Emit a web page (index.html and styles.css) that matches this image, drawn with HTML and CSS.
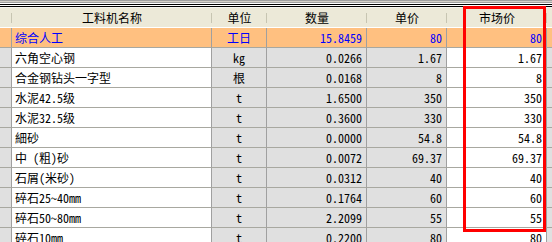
FILE: index.html
```html
<!DOCTYPE html>
<html>
<head>
<meta charset="utf-8">
<link rel="stylesheet" href="styles.css">
</head>
<body>
<div class="frame">
  <div class="topbar">
    <div class="l1"></div><div class="l2"></div><div class="l3"></div><div class="l4"></div>
    <div class="l5"></div><div class="l6"></div><div class="l7"></div><div class="l8"></div>
  </div>
  <div class="grid">
    <div class="hd"></div>
    <div class="hd">工料机名称</div>
    <div class="hd">单位</div>
    <div class="hd">数量</div>
    <div class="hd">单价</div>
    <div class="hd">市场价</div>
    <div class="hd last"></div>

    <div class="c rh sel"></div><div class="c name sel">综合人工</div><div class="c unit sel">工日</div><div class="c num sel">15.8459</div><div class="c num sel">80</div><div class="c num sel">80</div><div class="c ex sel"></div>
    <div class="c rh"></div><div class="c name">六角空心钢</div><div class="c unit g">kg</div><div class="c num g">0.0266</div><div class="c num g">1.67</div><div class="c num">1.67</div><div class="c ex g"></div>
    <div class="c rh"></div><div class="c name">合金钢钻头一字型</div><div class="c unit g">根</div><div class="c num g">0.0168</div><div class="c num g">8</div><div class="c num">8</div><div class="c ex g"></div>
    <div class="c rh"></div><div class="c name">水泥42.5级</div><div class="c unit g">t</div><div class="c num g">1.6500</div><div class="c num g">350</div><div class="c num">350</div><div class="c ex g"></div>
    <div class="c rh"></div><div class="c name">水泥32.5级</div><div class="c unit g">t</div><div class="c num g">0.3600</div><div class="c num g">330</div><div class="c num">330</div><div class="c ex g"></div>
    <div class="c rh"></div><div class="c name">細砂</div><div class="c unit g">t</div><div class="c num g">0.0000</div><div class="c num g">54.8</div><div class="c num">54.8</div><div class="c ex g"></div>
    <div class="c rh"></div><div class="c name">中 (粗)砂</div><div class="c unit g">t</div><div class="c num g">0.0072</div><div class="c num g">69.37</div><div class="c num">69.37</div><div class="c ex g"></div>
    <div class="c rh"></div><div class="c name">石屑(米砂)</div><div class="c unit g">t</div><div class="c num g">0.0312</div><div class="c num g">40</div><div class="c num">40</div><div class="c ex g"></div>
    <div class="c rh"></div><div class="c name">碎石25~40mm</div><div class="c unit g">t</div><div class="c num g">0.1764</div><div class="c num g">60</div><div class="c num">60</div><div class="c ex g"></div>
    <div class="c rh"></div><div class="c name">碎石50~80mm</div><div class="c unit g">t</div><div class="c num g">2.2099</div><div class="c num g">55</div><div class="c num">55</div><div class="c ex g"></div>
    <div class="c rh"></div><div class="c name">碎石10mm</div><div class="c unit g">t</div><div class="c num g">0.2200</div><div class="c num g">80</div><div class="c num">80</div><div class="c ex g"></div>
  </div>
  <div class="mark"></div>
</div>
</body>
</html>
```

FILE: styles.css
```css
html, body {
  margin: 0;
  padding: 0;
  background: #ffffff;
}
body {
  width: 552px;
  height: 242px;
  overflow: hidden;
  font-family: "Noto Sans Mono CJK SC", "Noto Sans CJK SC", "Liberation Mono", monospace;
  font-size: 12px;
  color: #000000;
}
.frame {
  position: relative;
  width: 552px;
  height: 242px;
  overflow: hidden;
}
.topbar div { height: 1px; }
.topbar .l1 { background: #a0a0a0; }
.topbar .l2 { background: #d4d0c8; }
.topbar .l3 { background: #a0a0a0; }
.topbar .l4 { background: #ffffff; }
.topbar .l5 { background: #000000; }
.topbar .l6 { background: #ffffff; }
.topbar .l7 { background: #000000; }
.topbar .l8 { background: #f4f3ee; }

.grid {
  display: grid;
  grid-template-columns: 12px 200px 55px 100px 80px 100px 1fr;
  grid-auto-rows: 20px;
  grid-template-rows: 20px;
}
.hd {
  position: relative;
  background: #ece9d8;
  border-bottom: 1px solid #ffffff;
  height: 20px;
  box-sizing: border-box;
  display: flex;
  align-items: center;
  justify-content: center;
  line-height: 1;
  font-size: 12px;
}
.hd::after {
  content: "";
  position: absolute;
  right: 0;
  top: 5px;
  bottom: 4px;
  width: 1px;
  background: #c7c5b2;
  box-shadow: 1px 0 0 #ffffff;
}
.hd.last::after { display: none; }

.c {
  box-sizing: border-box;
  height: 20px;
  border-right: 1px solid #a0a0a0;
  border-bottom: 1px solid #a8a8a0;
  display: flex;
  align-items: center;
  white-space: pre;
  overflow: hidden;
  line-height: 1;
  background: #ffffff;
}
.rh { background: #e0e0e0; }
.g { background: #e0e0e0; }
.name { padding-left: 3px; }
.unit { justify-content: center; }
.num { justify-content: flex-end; padding-right: 4px; }
.ex { border-right: none; }
.sel {
  background: #ffc080;
  color: #0000ff;
}

.mark {
  position: absolute;
  left: 463px;
  top: 6px;
  width: 83px;
  height: 226px;
  box-sizing: border-box;
  border: 3px solid #ff0000;
}
```
